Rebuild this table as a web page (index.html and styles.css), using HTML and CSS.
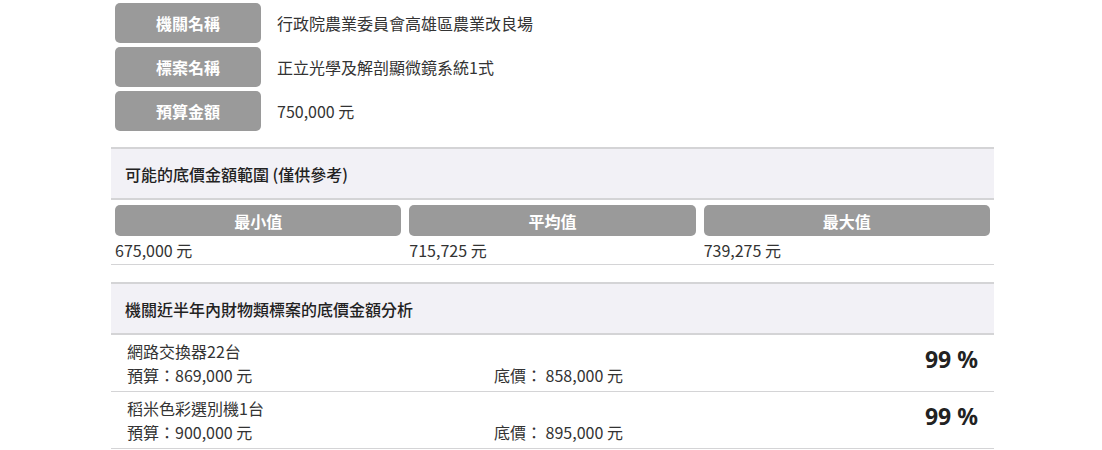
FILE: index.html
```html
<!DOCTYPE html>
<html lang="zh-Hant">
<head>
<meta charset="utf-8">
<title>底價分析</title>
<link rel="stylesheet" href="styles.css">
</head>
<body>
<div class="page">
  <div class="info">
    <div class="info-row"><div class="label">機關名稱</div><div class="value">行政院農業委員會高雄區農業改良場</div></div>
    <div class="info-row"><div class="label">標案名稱</div><div class="value">正立光學及解剖顯微鏡系統1式</div></div>
    <div class="info-row"><div class="label">預算金額</div><div class="value">750,000 元</div></div>
  </div>

  <div class="section-head">可能的底價金額範圍 (僅供參考)</div>
  <div class="range">
    <div class="range-col"><div class="pill">最小值</div><div class="range-val">675,000 元</div></div>
    <div class="range-col"><div class="pill">平均值</div><div class="range-val">715,725 元</div></div>
    <div class="range-col"><div class="pill">最大值</div><div class="range-val">739,275 元</div></div>
  </div>

  <div class="section-head second">機關近半年內財物類標案的底價金額分析</div>
  <div class="item">
    <div class="item-main">
      <div class="item-name">網路交換器22台</div>
      <div class="item-nums"><span class="budget">預算：869,000 元</span><span class="price">底價： 858,000 元</span></div>
    </div>
    <div class="pct">99 %</div>
  </div>
  <div class="item">
    <div class="item-main">
      <div class="item-name">稻米色彩選別機1台</div>
      <div class="item-nums"><span class="budget">預算：900,000 元</span><span class="price">底價： 895,000 元</span></div>
    </div>
    <div class="pct">99 %</div>
  </div>
</div>
</body>
</html>
```

FILE: styles.css
```css
html, body {
  margin: 0;
  padding: 0;
  background: #fff;
}
body {
  font-family: "Noto Sans CJK TC", "Noto Sans", sans-serif;
  font-size: 16px;
  color: #333;
}
.page {
  width: 883px;
  margin-left: 111px;
  padding-top: 3px;
}
.info {
  display: flex;
  flex-direction: column;
  gap: 4px;
  padding: 0 4px;
}
.info-row {
  display: flex;
  align-items: center;
  gap: 16px;
}
.label {
  width: 146px;
  height: 40px;
  border-radius: 5px;
  background: #9a9a9a;
  color: #fff;
  font-weight: 700;
  display: flex;
  align-items: center;
  justify-content: center;
}
.value {
  color: #333;
}
.section-head {
  margin-top: 16px;
  height: 49px;
  display: flex;
  align-items: center;
  padding-left: 14px;
  background: #f2f1f6;
  border-top: 2px solid #d4d4d6;
  border-bottom: 2px solid #d4d4d6;
  color: #222;
  font-weight: 500;
}
.section-head.second {
  margin-top: 17px;
}
.range {
  display: grid;
  grid-template-columns: repeat(3, 1fr);
  gap: 8px;
  padding: 5px 4px 0;
  border-bottom: 1px solid #d4d4d6;
}
.pill {
  height: 31px;
  border-radius: 5px;
  background: #9a9a9a;
  color: #fff;
  font-weight: 700;
  display: flex;
  align-items: center;
  justify-content: center;
}
.range-val {
  height: 28px;
  display: flex;
  align-items: center;
  color: #333;
}
.item {
  display: flex;
  align-items: center;
  justify-content: space-between;
  padding: 4px 16px;
  border-bottom: 1px solid #d4d4d6;
}
.item-main {
  display: flex;
  flex-direction: column;
}
.item-name, .item-nums {
  line-height: 24px;
  color: #333;
}
.item-nums {
  display: flex;
}
.budget {
  width: 367px;
}
.pct {
  font-family: "Noto Sans", sans-serif;
  font-size: 23px;
  font-weight: 700;
  color: #222;
  margin-top: -8px;
}
```
